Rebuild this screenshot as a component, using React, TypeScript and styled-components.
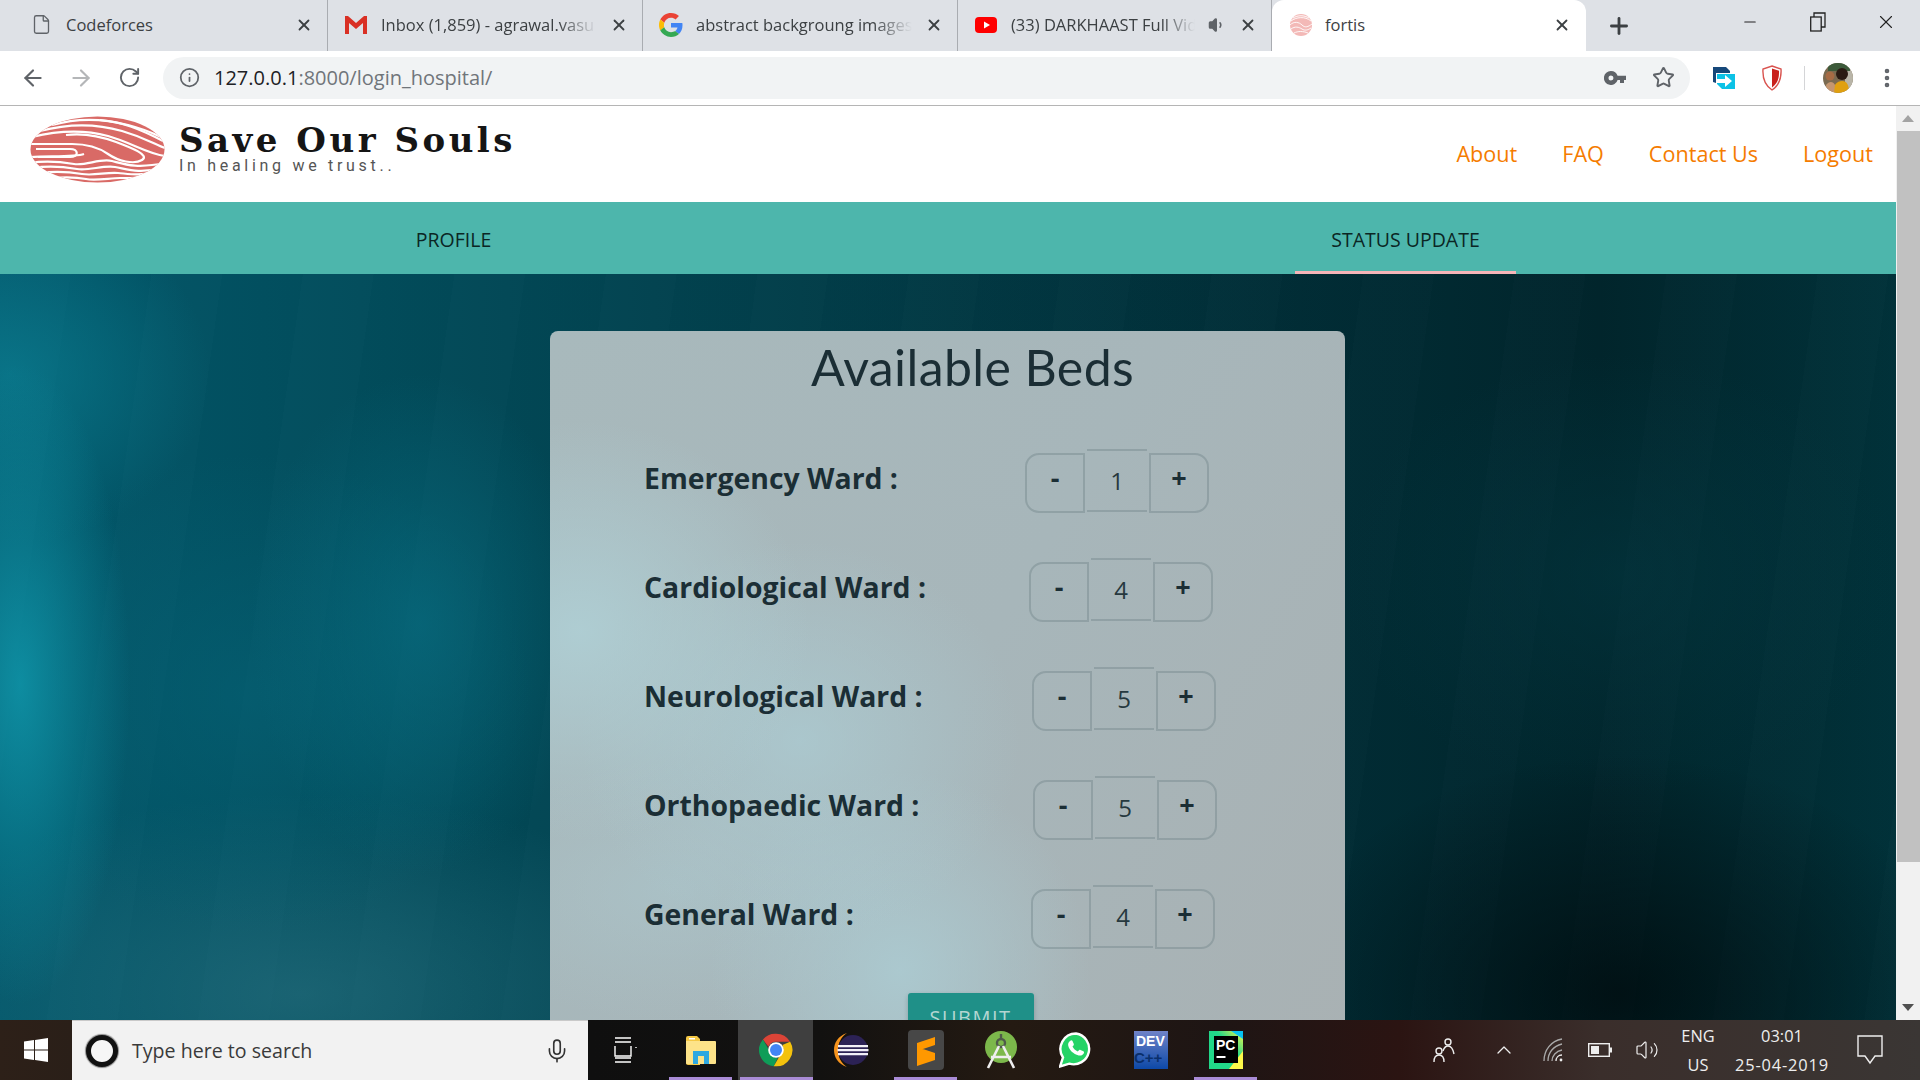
import React from "react";
import styled, { createGlobalStyle } from "styled-components";
import { ArrowLeft, ArrowRight, RotateCw, Info, Star, MoreVertical, X, Plus, File, Volume1, Volume2, Minus, ChevronUp, Mic } from "lucide-react";

const Global = createGlobalStyle`
  html, body { margin: 0; padding: 0; width: 1920px; height: 1080px; overflow: hidden; }
  * { box-sizing: border-box; }
  body { font-family: "Open Sans", "Liberation Sans", sans-serif; }
`;

const Screen = styled.div`
  width: 1920px; height: 1080px; display: flex; flex-direction: column; overflow: hidden; background: #fff;
`;

/* ---------- Browser chrome ---------- */
const TabStrip = styled.div`
  height: 51px; background: #dee1e6; display: flex; align-items: stretch; padding-left: 13px; flex: none;
`;
const Tab = styled.div<{ $active?: boolean; $width: number }>`
  width: ${p => p.$width}px; display: flex; align-items: center; padding: 0 ${p => p.$active ? 15 : 14}px 2px ${p => p.$active ? 17 : 16}px; gap: ${p => p.$active ? 12 : 13}px;
  color: #3c4043; font-size: 16.5px; position: relative; flex: none;
  background: ${p => p.$active ? "#fff" : "transparent"};
  border-radius: ${p => p.$active ? "12px 12px 0 0" : "0"};
  border-right: ${p => p.$active ? "none" : "1px solid #a9acb1"};
  background-clip: padding-box;
`;
const TabFav = styled.span`
  width: 24px; height: 24px; flex: none; display: flex; align-items: center; justify-content: center;
`;
const TabLabel = styled.span<{ $fade?: boolean }>`
  flex: 1; white-space: nowrap; overflow: hidden; min-width: 0;
  ${p => p.$fade ? "mask-image: linear-gradient(90deg, #000 82%, transparent 100%);" : ""}
`;
const TabClose = styled(X)`
  width: 18px; height: 18px; color: #3c4043; flex: none; stroke-width: 2.4;
`;
const NewTab = styled.div`
  width: 66px; display: flex; align-items: center; justify-content: center; color: #3c4043; flex: none;
`;
const WindowButtons = styled.div`
  margin-left: auto; display: flex; align-items: flex-start; color: #222;
`;
const WinBtn = styled.div`
  width: 68px; height: 44px; display: flex; align-items: center; justify-content: center;
`;

const Toolbar = styled.div`
  height: 55px; background: #fff; border-bottom: 1px solid #b5b5b5; display: flex; align-items: center; flex: none; padding: 0 0 1px 9px;
`;
const NavIcon = styled.div<{ $dim?: boolean }>`
  width: 48px; display: flex; justify-content: center; color: ${p => p.$dim ? "#b4b6b8" : "#5f6368"}; flex: none;
`;
const Omnibox = styled.div`
  width: 1527px; margin-left: 10px; height: 42px; border-radius: 21px; background: #f1f3f4; display: flex; align-items: center; padding: 0 3px 0 16px; color: #5f6368;
`;
const Url = styled.div`
  margin-left: 14px; font-size: 20px; color: #70757a; flex: 1;
  b { font-weight: 400; color: #202124; }
`;
const OmniIcon = styled.div`
  width: 48px; display: flex; justify-content: center; color: #5f6368;
`;
const ExtIcons = styled.div`
  display: flex; align-items: center; flex: 1;
`;
const ExtSlot = styled.div<{ $w: number }>`
  width: ${p => p.$w}px; display: flex; justify-content: center; align-items: center; color: #5f6368; flex: none;
`;
const ExtDivider = styled.div`
  width: 1px; height: 24px; background: #d4d5d7; flex: none;
`;

/* ---------- Site header ---------- */
const Content = styled.div`
  flex: 1; min-height: 0; display: flex; overflow: hidden;
`;
const Page = styled.div`
  width: 1896px; flex: none; display: flex; flex-direction: column; overflow: hidden;
`;
const SiteHeader = styled.header`
  height: 96px; flex: none; background: #fff; display: flex; align-items: center; padding: 0 23px 0 30px;
`;
const Brand = styled.div`
  display: flex; align-items: center; gap: 14px; margin-top: -10px;
`;
const BrandText = styled.div`
  display: flex; flex-direction: column; margin-top: -2px;
`;
const BrandName = styled.div`
  font-family: "DejaVu Serif", "Liberation Serif", serif; font-weight: 700; font-size: 34px; line-height: 36px; height: 35px; color: #151515; letter-spacing: 3.5px; white-space: nowrap;
`;
const BrandTag = styled.div`
  font-family: Roboto, sans-serif; font-size: 16px; line-height: 18px; color: #555; letter-spacing: 3.7px;
`;
const SiteNav = styled.nav`
  margin-left: auto; display: flex; gap: 45px; margin-top: -1px;
`;
const SiteLink = styled.a`
  color: #f57c00; font-size: 21.6px; font-weight: 400; white-space: nowrap;
`;

const TabBar = styled.div`
  height: 72px; flex: none; background: #4db6ac; display: flex; padding-left: 343px; gap: 731px;
`;
const PageTab = styled.div<{ $active?: boolean }>`
  width: 221px; text-align: center; line-height: 76px; font-size: 19.5px; color: #0b2624; position: relative;
  ${p => p.$active ? "border-bottom: 3px solid #f5b5b8; height: 72px;" : ""}
`;

/* ---------- Main ---------- */
const Main = styled.main`
  flex: 1; min-height: 0; overflow: hidden; padding: 57px 0 0 550px;
  background:
    radial-gradient(ellipse 110px 320px at 20px 410px, rgba(16,150,170,.85), transparent 100%),
    radial-gradient(ellipse 170px 250px at 420px 350px, rgba(8,110,130,.65), transparent 100%),
    radial-gradient(ellipse 280px 240px at 250px 420px, rgba(6,100,120,.55), transparent 100%),
    radial-gradient(ellipse 200px 170px at 10px 100px, rgba(12,130,150,.65), transparent 100%),
    radial-gradient(ellipse 420px 200px at 300px 720px, rgba(50,120,135,.5), transparent 100%),
    radial-gradient(ellipse 340px 240px at 1620px 720px, rgba(0,8,10,.7), transparent 100%),
    radial-gradient(ellipse 280px 220px at 1620px 300px, rgba(4,60,70,.45), transparent 100%),
    repeating-linear-gradient(98deg, rgba(255,255,255,.006) 0 70px, rgba(0,0,0,.012) 70px 150px),
    linear-gradient(90deg, #02586b 0, #024d5c 360px, #023e4a 800px, #012d36 1300px, #01252c 1600px, #01323a 1896px);
`;
const Card = styled.section`
  width: 795px; border-radius: 8px; padding: 0 0 40px 50px; color: #1b2e35;
  background:
    radial-gradient(ellipse 230px 210px at 30px 300px, rgba(176,210,216,.8), transparent 100%),
    radial-gradient(ellipse 220px 200px at 250px 410px, rgba(172,205,212,.7), transparent 100%),
    radial-gradient(ellipse 190px 200px at 350px 640px, rgba(172,205,212,.8), transparent 100%),
    radial-gradient(ellipse 230px 130px at 120px 560px, rgba(172,200,206,.55), transparent 100%),
    linear-gradient(120deg, #a8b9bc 0, #a7b6ba 50%, #a9b1b3 100%);
`;
const Title = styled.h1`
  margin: 0; height: 95px; line-height: 72px; font-family: Lato, sans-serif; font-weight: 400; font-size: 50px; text-align: center; letter-spacing: .4px;
`;
const WardRow = styled.div`
  height: 109px; display: flex; align-items: center; padding-left: 44px;
`;
const WardLabel = styled.div<{ $shift: number }>`
  width: ${p => 381 + p.$shift}px; font-weight: 700; font-size: 28.4px; color: #1b2e35; white-space: nowrap; margin-top: -5px; flex: none;
`;
const Stepper = styled.div`
  display: flex; height: 64px; gap: 2px;
`;
const StepBtn = styled.div<{ $side: "left" | "right" }>`
  width: 60px; height: 60px; margin-top: 4px; display: flex; align-items: center; justify-content: center; padding-bottom: 10px;
  font-size: 27px; font-weight: 700; color: #1b2e35;
  border: 2px solid rgba(110,130,135,.4);
  border-radius: ${p => p.$side === "left" ? "14px 0 0 14px" : "0 14px 14px 0"};
`;
const StepValue = styled.div`
  width: 60px; height: 63px; display: flex; align-items: center; justify-content: center; padding-bottom: 0;
  font-size: 24px; color: #26383e;
  border-top: 2px solid rgba(110,130,135,.4); border-bottom: 2px solid rgba(110,130,135,.4);
`;
const SubmitRow = styled.div`
  display: flex; justify-content: center; padding-top: 22px; padding-right: 4px;
`;
const Submit = styled.button`
  width: 126px; height: 60px; border: none; border-radius: 3px; background: #1f9088; color: #b4d6d2; font-family: inherit; font-size: 20px; letter-spacing: 1.5px;
  box-shadow: 0 2px 5px rgba(0,0,0,.2); padding: 0 0 12px;
`;

const Rail = styled.div`
  width: 24px; flex: none; background: #f1f1f1; display: flex; flex-direction: column; align-items: stretch;
`;
const RailBtn = styled.div`
  height: 25px; flex: none; display: flex; align-items: center; justify-content: center;
`;
const RailThumb = styled.div`
  height: 731px; background: #c1c1c1; margin-left: 1px; flex: none;
`;
const Arrow = styled.div<{ $up?: boolean }>`
  width: 0; height: 0; border-left: 6px solid transparent; border-right: 6px solid transparent;
  ${p => p.$up ? "border-bottom: 7px solid #a3a3a3;" : "border-top: 7px solid #505050;"}
`;
const RailSpacer = styled.div`
  flex: 1;
`;

/* ---------- Taskbar ---------- */
const Taskbar = styled.footer`
  height: 60px; flex: none; display: flex; align-items: stretch; color: #fff;
  background: linear-gradient(90deg, #2d2018 0, #2a1f18 72px, #0f0f0f 590px, #121110 820px, #241a12 1010px, #1e1514 1220px, #2b1412 1400px, #3a2e2b 1600px, #3a3634 1920px);
`;
const StartBtn = styled.div`
  width: 72px; display: flex; align-items: center; justify-content: center;
`;
const SearchBox = styled.div`
  width: 516px; background: #f2f2f2; border-top: 1px solid #c9c9c9; display: flex; align-items: center; padding: 0 18px 0 14px; color: #3a3a3a; font-size: 19.6px;
`;
const Cortana = styled.div`
  width: 32px; height: 32px; border-radius: 50%; border: 5px solid #111; background: #f6f6f6; box-shadow: 0 0 1px 1px #888; flex: none; margin-right: 14px;
`;
const SearchText = styled.span`
  flex: 1;
`;
const TaskItem = styled.div<{ $open?: boolean; $focus?: boolean }>`
  width: 75px; flex: none; display: flex; align-items: center; justify-content: center; position: relative;
  background: ${p => p.$focus ? "#3f3f3f" : "transparent"};
  ${p => p.$open ? "&::after { content: ''; position: absolute; left: " + (p.$focus ? "2px" : "6px") + "; right: " + (p.$focus ? "0" : "6px") + "; bottom: 0; height: 3px; background: #a98bd6; }" : ""}
`;
const Tray = styled.div`
  margin-left: auto; display: flex; align-items: center; padding-right: 14px;
`;
const TraySlot = styled.div<{ $w: number }>`
  width: ${p => p.$w}px; flex: none; display: flex; flex-direction: column; align-items: center; justify-content: center; gap: 5px; font-size: 16.4px; line-height: 24px; color: #eee; text-align: center;
`;
const TrayDate = styled.span`
  letter-spacing: .85px; white-space: nowrap;
`;

/* ---------- Drawings ---------- */
const Gmail = () => (
  <svg width="24" height="20" viewBox="0 0 24 20"><path d="M1 1h3l8 7 8-7h3v18h-4V8l-7 6-7-6v11H1z" fill="#d93025" /></svg>
);
const Google = () => (
  <svg width="24" height="24" viewBox="0 0 48 48">
    <path fill="#EA4335" d="M24 9.500c3.500 0 6.700 1.300 9.100 3.500l6.800-6.800C35.800 2.400 30.300 0 24 0 14.600 0 6.500 5.400 2.600 13.200l7.900 6.100C12.400 13.700 17.700 9.500 24 9.500z" />
    <path fill="#4285F4" d="M47 24.500c0-1.600-.1-3.100-.4-4.500H24v9h13c-.6 3-2.300 5.500-4.800 7.200l7.700 6C44.400 38 47 31.800 47 24.500z" />
    <path fill="#FBBC05" d="M10.500 28.700C10 27.200 9.800 25.600 9.800 24s.3-3.200.8-4.700l-7.900-6.100C1 16.400 0 20.100 0 24s1 7.600 2.600 10.800z" />
    <path fill="#34A853" d="M24 48c6.500 0 11.900-2.100 15.900-5.800l-7.700-6c-2.200 1.400-4.900 2.300-8.200 2.300-6.300 0-11.600-4.200-13.500-9.900l-7.900 6.100C6.500 42.600 14.600 48 24 48z" />
  </svg>
);
const YouTube = () => (
  <svg width="22" height="16" viewBox="0 0 22 16"><rect width="22" height="16" rx="4" fill="#f00" /><path d="M9 4.500 15 8l-6 3.500z" fill="#fff" /></svg>
);
const Fingerprint = () => (
  <svg width="24" height="24" viewBox="0 0 24 24">
    <circle cx="12" cy="12" r="11" fill="#f3b9b7" />
    <g fill="none" stroke="#fff" strokeWidth=".9">
      <path d="M2 8c5-4 14-5 20 0" /><path d="M1 12c4-4 9-3 12 0s6 2 10-1" /><path d="M2 16c4-3 8-2 11 0s6 1 9-1" /><path d="M5 20c4-2 9-2 14 0" /><path d="M4 5c5-3 11-3 16 0" />
    </g>
  </svg>
);
const Logo = () => (
  <svg width="135" height="67" viewBox="0 0 135 67">
    <defs><clipPath id="logoClip"><ellipse cx="67.500" cy="33.500" rx="67" ry="33" /></clipPath></defs>
    <g clipPath="url(#logoClip)">
      <rect width="135" height="67" fill="#d96a66" />
      <g fill="none" stroke="#fff" strokeWidth="2.200">
        <path d="M22 9C50 1 75 3 98 9s28 10 37 14" />
        <path d="M10 15C40 7 68 8 92 15s32 13 43 17" />
        <path d="M2 21C30 14 56 14 78 20s40 18 57 20" />
        <path d="M0 28h42c14 0 26 3 36 10s26 11 34 6-10-12-26-18-34-9-50-7" />
        <path d="M6 33h34c9 0 9 8 0 8H8" />
        <path d="M0 47c18-3 32-1 44 1s26-6 38-3 24 8 53 2" />
        <path d="M3 52c18-3 32-1 44 1s26-4 38-2 24 7 46 1" />
        <path d="M10 57c16-2 30-1 42 1s24-2 36-1 22 3 36-1" />
        <path d="M22 62c12-1 24-1 34 1s24-1 34-1 14 1 20-1" />
        <path d="M70 4c22 2 38 8 65 22" />
        <path d="M54 38c-8 3-28 2-54 3" />
      </g>
    </g>
  </svg>
);
const KeyIcon = () => (
  <svg width="22" height="14" viewBox="0 0 22 14"><path fillRule="evenodd" d="M7 0a7 7 0 0 1 6.600 4.700H22V9h-2v3h-4V9h-2.400A7 7 0 1 1 7 0zm0 4.500a2.500 2.500 0 1 0 0 5 2.500 2.500 0 0 0 0-5z" fill="#5f6368" /></svg>
);
const Restore = () => (
  <svg width="16" height="20" viewBox="0 0 16 20" fill="none" stroke="#222" strokeWidth="1.300"><rect x=".7" y="5" width="10.500" height="14" /><path d="M4 5V1h11v14h-4" /></svg>
);
const ExtArrow = () => (
  <svg width="24" height="24" viewBox="0 0 24 24">
    <path d="M1 1h13l4 4v2H4v10l-3-1z" fill="#16487a" />
    <path d="M5 8h18v15H10l-5-5z" fill="#0cc2e6" />
    <path d="M5 13h8V9l7 6-7 6v-4H5z" fill="#fff" />
  </svg>
);
const ExtShield = () => (
  <svg width="22" height="26" viewBox="0 0 22 26">
    <path d="M11 1l9 3c.6 9-1.500 16-9 21C3.500 20 1.400 13 2 4z" fill="#fff" stroke="#d9534f" strokeWidth="1.400" />
    <path d="M11 3.500l7 2.300c.3 7-1.200 12.500-7 16.700z" fill="#c9201c" />
  </svg>
);
const Avatar = () => (
  <svg width="30" height="30" viewBox="0 0 30 30">
    <defs><clipPath id="avClip"><circle cx="15" cy="15" r="15" /></clipPath></defs>
    <g clipPath="url(#avClip)">
      <rect width="30" height="30" fill="#7a6a50" />
      <rect x="22" y="6" width="8" height="20" fill="#b9b5a8" />
      <path d="M5 0h22v8H5z" fill="#3c5a3a" />
      <circle cx="19" cy="11" r="6" fill="#2a1a12" />
      <circle cx="7" cy="13" r="4.500" fill="#a66b44" />
      <path d="M10 30c0-8 4-12 9-12s7 4 7 12z" fill="#e0a010" />
      <path d="M3 22c3-4 7-4 9 0l-1 8H4z" fill="#c59670" />
    </g>
  </svg>
);
const WinLogo = () => (
  <svg width="24" height="24" viewBox="0 0 24 24"><path d="M0 3.400 10 2v9.500H0zM11 1.900 24 0v11.500H11zM0 12.500h10V22L0 20.600zM11 12.500h13V24l-13-1.900z" fill="#fff" /></svg>
);
const TaskView = () => (
  <svg width="26" height="26" viewBox="0 0 26 26" fill="none" stroke="#fff" strokeWidth="1.400">
    <path d="M2 1h16M2 5h16M2 9v10h16V9M2 25h16M2 21h16M23 10v1" />
  </svg>
);
const Explorer = () => (
  <svg width="32" height="30" viewBox="0 0 32 30">
    <path d="M1 3a2 2 0 0 1 2-2h9l3 3v26H3a2 2 0 0 1-2-2z" fill="#f5c946" />
    <path d="M1 6h29a1 1 0 0 1 1 1v21a1 1 0 0 1-1 1H2a1 1 0 0 1-1-1z" fill="#fde389" />
    <path d="M8 16h16v13h-5v-8h-6v8H8z" fill="#2ea8e0" />
    <rect x="4" y="3" width="6" height="1.500" fill="#fff" />
  </svg>
);
const ChromeIcon = () => (
  <svg width="34" height="34" viewBox="0 0 48 48">
    <path d="M24 1a23 23 0 0 1 20 11.500H24a11.500 11.500 0 0 0-10.500 7L5.500 9A23 23 0 0 1 24 1z" fill="#db4437" />
    <path d="M5.500 9l10 17.500a11.500 11.500 0 0 0 10.800 8.800L20.800 46.800A23 23 0 0 1 5.500 9z" fill="#0f9d58" />
    <path d="M44 12.500A23 23 0 0 1 20.800 46.800l10.200-17.500A11.500 11.500 0 0 0 33 17z" fill="#f4c20d" />
    <circle cx="24" cy="24" r="11" fill="#fff" /><circle cx="24" cy="24" r="8.500" fill="#4285f4" />
  </svg>
);
const Eclipse = () => (
  <svg width="36" height="36" viewBox="0 0 36 36">
    <path d="M14 1C5 4 1 11 1 18s4 14 13 17C8 31 5 25 5 18S8 5 14 1z" fill="#f7941e" />
    <circle cx="20" cy="18" r="15" fill="#2c2255" />
    <path d="M5 13h30v2.200H5zM4.500 17h31v2.200h-31zM5 21h30v2.200H5z" fill="#f2f0f7" />
  </svg>
);
const Sublime = () => (
  <svg width="36" height="40" viewBox="0 0 36 40">
    <rect width="36" height="40" rx="4" fill="#474747" />
    <path d="M27 7v8L9 21v-8zM9 17l18 6v7L9 36v-8z" fill="#ff9800" />
  </svg>
);
const AndroidStudio = () => (
  <svg width="34" height="40" viewBox="0 0 34 40">
    <circle cx="17" cy="17" r="16" fill="#7cb84b" />
    <circle cx="17" cy="13" r="4" fill="none" stroke="#4f5b4a" strokeWidth="2.400" />
    <path d="M15 16 4 38M19 16l11 22M7 27h20" stroke="#eee" strokeWidth="2.600" fill="none" />
    <path d="M17 4v5" stroke="#4f5b4a" strokeWidth="2.400" />
  </svg>
);
const WhatsApp = () => (
  <svg width="34" height="36" viewBox="0 0 34 36">
    <path d="M17 1.500a15.500 15.500 0 0 0-13 24L1 34.500l9.300-2.800A15.500 15.500 0 1 0 17 1.500z" fill="#25d366" stroke="#fff" strokeWidth="2.400" />
    <path d="M11 9c1-1 2-1 2.500 0l1.300 3c.2.500 0 1-.3 1.400l-1 1.200c1 2.200 3 4 5.200 5l1.300-1.400c.4-.3.900-.5 1.400-.3l3 1.400c.8.400.8 1.400.3 2.300-1 1.700-3 2.400-5 1.800-5.500-1.500-9.500-5.500-10.500-10-.3-1.600.3-3.400 1.800-4.400z" fill="#fff" />
  </svg>
);
const SvgLabel = styled.text<{ $size: number }>`
  font-family: "Liberation Sans", sans-serif; font-weight: 700; font-size: ${p => p.$size}px;
`;
const DevCpp = () => (
  <svg width="34" height="38" viewBox="0 0 34 38">
    <defs><linearGradient id="devG" x1="0" y1="0" x2="0" y2="1"><stop offset="0" stopColor="#6f83c8" /><stop offset="1" stopColor="#0d49a8" /></linearGradient></defs>
    <rect width="34" height="38" fill="url(#devG)" />
    <SvgLabel $size={14} x="2" y="15" fill="#fff">DEV</SvgLabel>
    <SvgLabel $size={15} x="0" y="32" fill="#0a2f6b">C++</SvgLabel>
  </svg>
);
const PyCharm = () => (
  <svg width="34" height="38" viewBox="0 0 34 38">
    <defs><linearGradient id="pcG" x1="0" y1="1" x2="1" y2="0"><stop offset="0" stopColor="#21d789" /><stop offset=".6" stopColor="#21d789" /><stop offset="1" stopColor="#fcf84a" /></linearGradient></defs>
    <rect width="34" height="38" fill="url(#pcG)" />
    <path d="M34 20v18H20z" fill="#fcf84a" /><path d="M22 0h12v8z" fill="#07c3f2" />
    <rect x="5" y="5" width="24" height="27" fill="#000" />
    <SvgLabel $size={14} x="7" y="19" fill="#fff">PC</SvgLabel>
    <rect x="7.500" y="25" width="9" height="2" fill="#fff" />
  </svg>
);
const People = () => (
  <svg width="24" height="26" viewBox="0 0 24 26" fill="none" stroke="#eee" strokeWidth="1.400">
    <circle cx="7" cy="14" r="3" /><path d="M2 25c0-5 2-7 5-7s5 2 5 7" />
    <circle cx="16" cy="5" r="3" /><path d="M11 14c1-3 3-5 5-5 3 0 5 3 6 8" />
  </svg>
);
const Wifi = () => (
  <svg width="20" height="24" viewBox="0 0 20 24" fill="none" stroke="#aaa" strokeWidth="1.300">
    <path d="M1 23C1 12 8 3 19 1M5 23C5 15 10 8 19 6M9 23c0-5 4-10 10-11" /><path d="M13 23c0-3 2-6 6-6" stroke="#eee" />
    <circle cx="18" cy="22" r="1.400" fill="#eee" stroke="none" />
  </svg>
);
const Battery = () => (
  <svg width="24" height="14" viewBox="0 0 24 14"><rect x=".7" y=".7" width="20.600" height="12.600" fill="none" stroke="#eee" strokeWidth="1.400" /><rect x="3" y="3" width="8" height="8" fill="#eee" /><rect x="22" y="4.500" width="2" height="5" fill="#eee" /></svg>
);
const Notify = () => (
  <svg width="26" height="30" viewBox="0 0 26 30" fill="none" stroke="#eee" strokeWidth="1.400"><path d="M1 1h24v20h-7l-5 7-5-7H1z" /></svg>
);
const BackIcon = styled(ArrowLeft)`width: 26px; height: 26px;`;
const ForwardIcon = styled(ArrowRight)`width: 26px; height: 26px;`;
const ReloadIcon = styled(RotateCw)`width: 23px; height: 23px;`;

const wards = [
  { name: "Emergency Ward :", value: 1, shift: 0 },
  { name: "Cardiological Ward :", value: 4, shift: 4 },
  { name: "Neurological Ward :", value: 5, shift: 7 },
  { name: "Orthopaedic Ward :", value: 5, shift: 8 },
  { name: "General Ward :", value: 4, shift: 6 },
];

export default function App() {
  return (
    <Screen>
      <Global />
      <TabStrip>
        <Tab $width={315}>
          <TabFav><File size={21} color="#5f6368" strokeWidth={1.5} /></TabFav>
          <TabLabel>Codeforces</TabLabel>
          <TabClose />
        </Tab>
        <Tab $width={315}>
          <TabFav><Gmail /></TabFav>
          <TabLabel $fade>Inbox (1,859) - agrawal.vasu</TabLabel>
          <TabClose />
        </Tab>
        <Tab $width={315}>
          <TabFav><Google /></TabFav>
          <TabLabel $fade>abstract backgroung images</TabLabel>
          <TabClose />
        </Tab>
        <Tab $width={314}>
          <TabFav><YouTube /></TabFav>
          <TabLabel $fade>(33) DARKHAAST Full Video</TabLabel>
          <Volume1 size={18} color="#5f6368" fill="#5f6368" />
          <TabClose />
        </Tab>
        <Tab $active $width={314}>
          <TabFav><Fingerprint /></TabFav>
          <TabLabel>fortis</TabLabel>
          <TabClose />
        </Tab>
        <NewTab><Plus size={26} strokeWidth={2.6} /></NewTab>
        <WindowButtons>
          <WinBtn><Minus size={18} strokeWidth={1.4} /></WinBtn>
          <WinBtn><Restore /></WinBtn>
          <WinBtn><X size={22} strokeWidth={1.2} /></WinBtn>
        </WindowButtons>
      </TabStrip>
      <Toolbar>
        <NavIcon><BackIcon /></NavIcon>
        <NavIcon $dim><ForwardIcon /></NavIcon>
        <NavIcon><ReloadIcon /></NavIcon>
        <Omnibox>
          <Info size={21} />
          <Url><b>127.0.0.1</b>:8000/login_hospital/</Url>
          <OmniIcon><KeyIcon /></OmniIcon>
          <OmniIcon><Star size={23} strokeWidth={2} /></OmniIcon>
        </Omnibox>
        <ExtIcons>
          <ExtSlot $w={68}><ExtArrow /></ExtSlot>
          <ExtSlot $w={28}><ExtShield /></ExtSlot>
          <ExtSlot $w={18} />
          <ExtDivider />
          <ExtSlot $w={66}><Avatar /></ExtSlot>
          <ExtSlot $w={32}><MoreVertical size={24} strokeWidth={2.6} /></ExtSlot>
        </ExtIcons>
      </Toolbar>
      <Content>
        <Page>
          <SiteHeader>
            <Brand>
              <Logo />
              <BrandText>
                <BrandName>Save Our Souls</BrandName>
                <BrandTag>In healing we trust..</BrandTag>
              </BrandText>
            </Brand>
            <SiteNav>
              <SiteLink>About</SiteLink>
              <SiteLink>FAQ</SiteLink>
              <SiteLink>Contact Us</SiteLink>
              <SiteLink>Logout</SiteLink>
            </SiteNav>
          </SiteHeader>
          <TabBar>
            <PageTab>PROFILE</PageTab>
            <PageTab $active>STATUS UPDATE</PageTab>
          </TabBar>
          <Main>
            <Card>
              <Title>Available Beds</Title>
              {wards.map(w => (
                <WardRow key={w.name}>
                  <WardLabel $shift={w.shift}>{w.name}</WardLabel>
                  <Stepper>
                    <StepBtn $side="left">-</StepBtn>
                    <StepValue>{w.value}</StepValue>
                    <StepBtn $side="right">+</StepBtn>
                  </Stepper>
                </WardRow>
              ))}
              <SubmitRow><Submit>SUBMIT</Submit></SubmitRow>
            </Card>
          </Main>
        </Page>
        <Rail>
          <RailBtn><Arrow $up /></RailBtn>
          <RailThumb />
          <RailSpacer />
          <RailBtn><Arrow /></RailBtn>
        </Rail>
      </Content>
      <Taskbar>
        <StartBtn><WinLogo /></StartBtn>
        <SearchBox>
          <Cortana />
          <SearchText>Type here to search</SearchText>
          <Mic size={26} color="#333" strokeWidth={1.5} />
        </SearchBox>
        <TaskItem><TaskView /></TaskItem>
        <TaskItem $open><Explorer /></TaskItem>
        <TaskItem $open $focus><ChromeIcon /></TaskItem>
        <TaskItem><Eclipse /></TaskItem>
        <TaskItem $open><Sublime /></TaskItem>
        <TaskItem><AndroidStudio /></TaskItem>
        <TaskItem><WhatsApp /></TaskItem>
        <TaskItem><DevCpp /></TaskItem>
        <TaskItem $open><PyCharm /></TaskItem>
        <Tray>
          <TraySlot $w={60}><People /></TraySlot>
          <TraySlot $w={60}><ChevronUp size={24} strokeWidth={1.3} color="#eee" /></TraySlot>
          <TraySlot $w={38}><Wifi /></TraySlot>
          <TraySlot $w={56}><Battery /></TraySlot>
          <TraySlot $w={38}><Volume2 size={24} strokeWidth={1.2} color="#eee" /></TraySlot>
          <TraySlot $w={64}><span>ENG</span><span>US</span></TraySlot>
          <TraySlot $w={104}><span>03:01</span><TrayDate>25-04-2019</TrayDate></TraySlot>
          <TraySlot $w={72}><Notify /></TraySlot>
        </Tray>
      </Taskbar>
    </Screen>
  );
}
